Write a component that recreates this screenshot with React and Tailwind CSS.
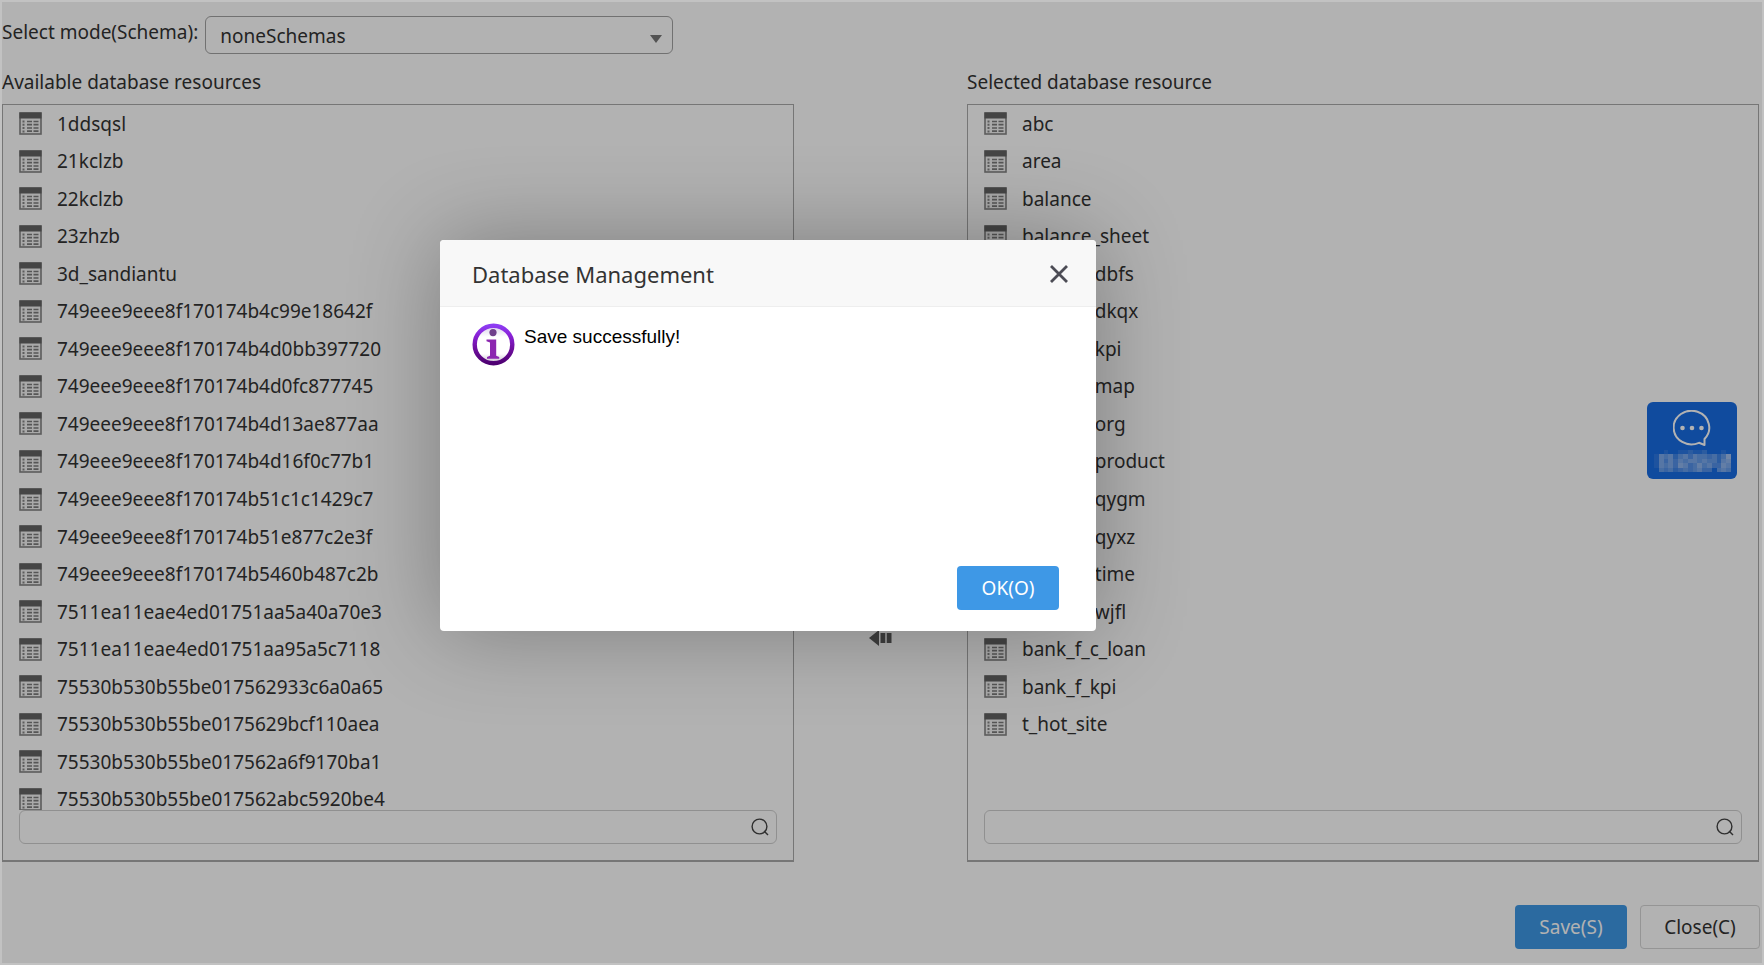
import React from "react";

const available = [
  "1ddsqsl", "21kclzb", "22kclzb", "23zhzb", "3d_sandiantu",
  "749eee9eee8f170174b4c99e18642f", "749eee9eee8f170174b4d0bb397720",
  "749eee9eee8f170174b4d0fc877745", "749eee9eee8f170174b4d13ae877aa",
  "749eee9eee8f170174b4d16f0c77b1", "749eee9eee8f170174b51c1c1429c7",
  "749eee9eee8f170174b51e877c2e3f", "749eee9eee8f170174b5460b487c2b",
  "7511ea11eae4ed01751aa5a40a70e3", "7511ea11eae4ed01751aa95a5c7118",
  "75530b530b55be017562933c6a0a65", "75530b530b55be0175629bcf110aea",
  "75530b530b55be017562a6f9170ba1", "75530b530b55be017562abc5920be4",
];

const selected = [
  "abc", "area", "balance", "balance_sheet", "bank_d_dbfs", "bank_d_dkqx",
  "bank_d_kpi", "bank_d_map", "bank_d_org", "bank_d_product", "bank_d_qygm",
  "bank_d_qyxz", "bank_d_time", "bank_d_wjfl", "bank_f_c_loan", "bank_f_kpi",
  "t_hot_site",
];

// Brightness (0-9) of each tile in the pixelated caption of the chat button.
const captionTiles = [
  "0010011211200010",
  "1545245354434247",
  "1535354554544256",
  "1545365346453365",
  "0434234345330454",
];

function TableIcon() {
  return (
    <svg className="h-[23px] w-[23px] shrink-0" viewBox="0 0 23 23" aria-hidden="true">
      <rect x="1" y="1" width="21" height="21" fill="#f2f2f2" stroke="#848484" strokeWidth="1.6" />
      <rect x="0.5" y="0.5" width="22" height="6" fill="#636363" />
      <path d="M4.500 8.500v12" stroke="#858585" strokeWidth="2" strokeDasharray="2 1.300" />
      <path d="M8 9.500h5M8 12.700h5M8 16h5M8 19.200h5M14.500 9.500h5M14.500 12.700h5M14.500 16h5M14.500 19.200h5" stroke="#7c7c7c" strokeWidth="1.700" />
    </svg>
  );
}

function SearchIcon() {
  return (
    <svg className="h-[18px] w-[18px]" viewBox="0 0 18 18" fill="none" stroke="#444" strokeWidth="1.4" aria-hidden="true">
      <circle cx="8.5" cy="8.5" r="7.4" />
      <path d="M13 13l4 4" />
    </svg>
  );
}

function ResourcePanel({ title, items, searchLabel }) {
  return (
    <section className="min-w-0 flex-1">
      <h2 className="h-[35px] text-[19px] leading-[26px]">{title}</h2>
      <div className="border border-b-2 border-[#aaa] pb-4">
        <div className="h-[705px] overflow-hidden pl-4">
          <ul className="grid h-[713px] grid-rows-[repeat(19,minmax(0,1fr))]">
            {items.map((name) => (
              <li key={name} className="flex items-center gap-[15px] text-[19px] leading-[26px]">
                <TableIcon />
                <span>{name}</span>
              </li>
            ))}
          </ul>
        </div>
        <form className="mx-4 flex h-[34px] items-center rounded-md border border-[#cfcfcf] pr-[7px]">
          <input type="text" aria-label={searchLabel} className="min-w-0 flex-1 bg-transparent px-3 outline-none" />
          <button type="button" aria-label="Search"><SearchIcon /></button>
        </form>
      </div>
    </section>
  );
}

function InfoIcon() {
  return (
    <svg className="h-[43px] w-[43px] shrink-0" viewBox="0 0 43 43" aria-hidden="true">
      <defs>
        <linearGradient id="ring" x1="0" y1="0" x2="0" y2="1">
          <stop offset="0" stopColor="#8d3cf2" />
          <stop offset="0.25" stopColor="#8a22d8" />
          <stop offset="0.6" stopColor="#7010a0" />
          <stop offset="1" stopColor="#4e0072" />
        </linearGradient>
        <linearGradient id="glass" x1="0" y1="0" x2="0" y2="1">
          <stop offset="0" stopColor="#d9d0ea" />
          <stop offset="0.3" stopColor="#ffffff" />
          <stop offset="0.75" stopColor="#ffffff" />
          <stop offset="1" stopColor="#c4b8ca" />
        </linearGradient>
      </defs>
      <circle cx="21.500" cy="21.500" r="18.800" fill="url(#glass)" stroke="url(#ring)" strokeWidth="4.400" />
      <circle cx="21" cy="9.600" r="3.600" fill="#70408c" />
      <path d="M14.500 16.500h9.700v16.300l3 1.200v1.700H15V34l3-1.200V19.400l-3.500-1.200z" fill="#8c27b0" />
    </svg>
  );
}

function ChatIcon() {
  return (
    <svg className="h-9 w-[38px] shrink-0" viewBox="0 0 38 36" fill="none" stroke="#fff" strokeWidth="2" aria-hidden="true">
      <path d="M31.500 29V35l-5.500-2.200A17.800 16.800 0 1 1 31.500 29z" strokeLinejoin="round" />
      <g fill="#fff" stroke="none">
        <circle cx="9.500" cy="18" r="2.300" />
        <circle cx="19" cy="18" r="2.300" />
        <circle cx="28.500" cy="18" r="2.300" />
      </g>
    </svg>
  );
}

function ChatCaption() {
  return (
    <svg className="mt-1 h-[22px] w-[77px] shrink-0" viewBox="0 0 80 25" preserveAspectRatio="none" shapeRendering="crispEdges" aria-hidden="true">
      {captionTiles.flatMap((row, y) =>
        [...row].map((level, x) => (
          <rect key={`${x}-${y}`} x={x * 5} y={y * 5} width="5" height="5" fill="#dfe6f5" fillOpacity={Number(level) / 10} />
        ))
      )}
    </svg>
  );
}

export default function App() {
  return (
    <div className="relative min-h-screen border-2 border-[#c2c2c2] bg-white font-['Noto_Sans',sans-serif] text-[19px] text-[#333]">
      <main className="flex flex-col">
        <div className="flex items-start gap-[7px] pt-[14px]">
          <label htmlFor="schema" className="pt-[3px] leading-[26px]">Select mode(Schema):</label>
          <div className="relative w-[468px]">
            <select id="schema" className="h-[38px] w-full appearance-none rounded-md border border-[#a2a2a2] bg-transparent px-[14px] pt-[2px] outline-none">
              <option>noneSchemas</option>
            </select>
            <svg className="pointer-events-none absolute right-[11px] top-[19px] h-2 w-3" viewBox="0 0 12 8" aria-hidden="true">
              <path d="M0 0h12L6 8z" fill="#777" />
            </svg>
          </div>
        </div>

        <div className="flex pr-[3px] pt-[15px]">
          <ResourcePanel title="Available database resources" items={available} searchLabel="Search available resources" />
          <div className="flex w-[173px] flex-col items-center pt-[561px]">
            <button type="button" aria-label="Remove from selected">
              <svg className="h-4 w-[23px]" viewBox="0 0 23 16" fill="#5b5b5b" aria-hidden="true">
                <path d="M0 8l10-8v16zM11.500 3h4.800v10h-4.800zM17.700 3h4.800v10h-4.800z" />
              </svg>
            </button>
          </div>
          <ResourcePanel title="Selected database resource" items={selected} searchLabel="Search selected resources" />
        </div>

        <div className="flex justify-end gap-[13px] pr-[2px] pt-[43px]">
          <button type="button" className="h-[44px] w-[112px] rounded bg-[#3e98e6] text-white">Save(S)</button>
          <button type="button" className="h-[44px] w-[120px] rounded border border-[#d6d6d6]">Close(C)</button>
        </div>
      </main>

      <button type="button" aria-label="Chat" className="absolute right-[25px] top-[400px] flex h-[77px] w-[90px] flex-col items-center rounded-md bg-[#176ce3] pt-2">
        <ChatIcon />
        <ChatCaption />
      </button>

      <div className="absolute inset-0 bg-black/30" />

      <div role="dialog" aria-modal="true" aria-labelledby="dialog-title" className="absolute left-[438px] top-[238px] flex h-[391px] w-[656px] flex-col rounded-sm bg-white shadow-[0_0_90px_rgba(0,0,0,0.3)]">
        <header className="flex h-[67px] items-center justify-between rounded-t-sm border-b border-[#eee] bg-[#f8f8f8] pl-8 pr-7 pt-[2px]">
          <h1 id="dialog-title" className="text-[22px] leading-[30px]">Database Management</h1>
          <button type="button" aria-label="Close">
            <svg className="h-[18px] w-[18px]" viewBox="0 0 18 18" stroke="#4c4c55" strokeWidth="2.800" aria-hidden="true">
              <path d="M1 1l16 16M17 1L1 17" />
            </svg>
          </button>
        </header>
        <div className="flex flex-1 items-start gap-[9px] px-8 pt-4">
          <InfoIcon />
          <p className="pt-1 font-['Liberation_Sans',sans-serif] text-[19px] leading-[20px] text-black">Save successfully!</p>
        </div>
        <footer className="flex justify-end pb-[21px] pr-[37px]">
          <button type="button" className="h-[44px] w-[102px] rounded bg-[#3e98e6] text-white">OK(O)</button>
        </footer>
      </div>
    </div>
  );
}
